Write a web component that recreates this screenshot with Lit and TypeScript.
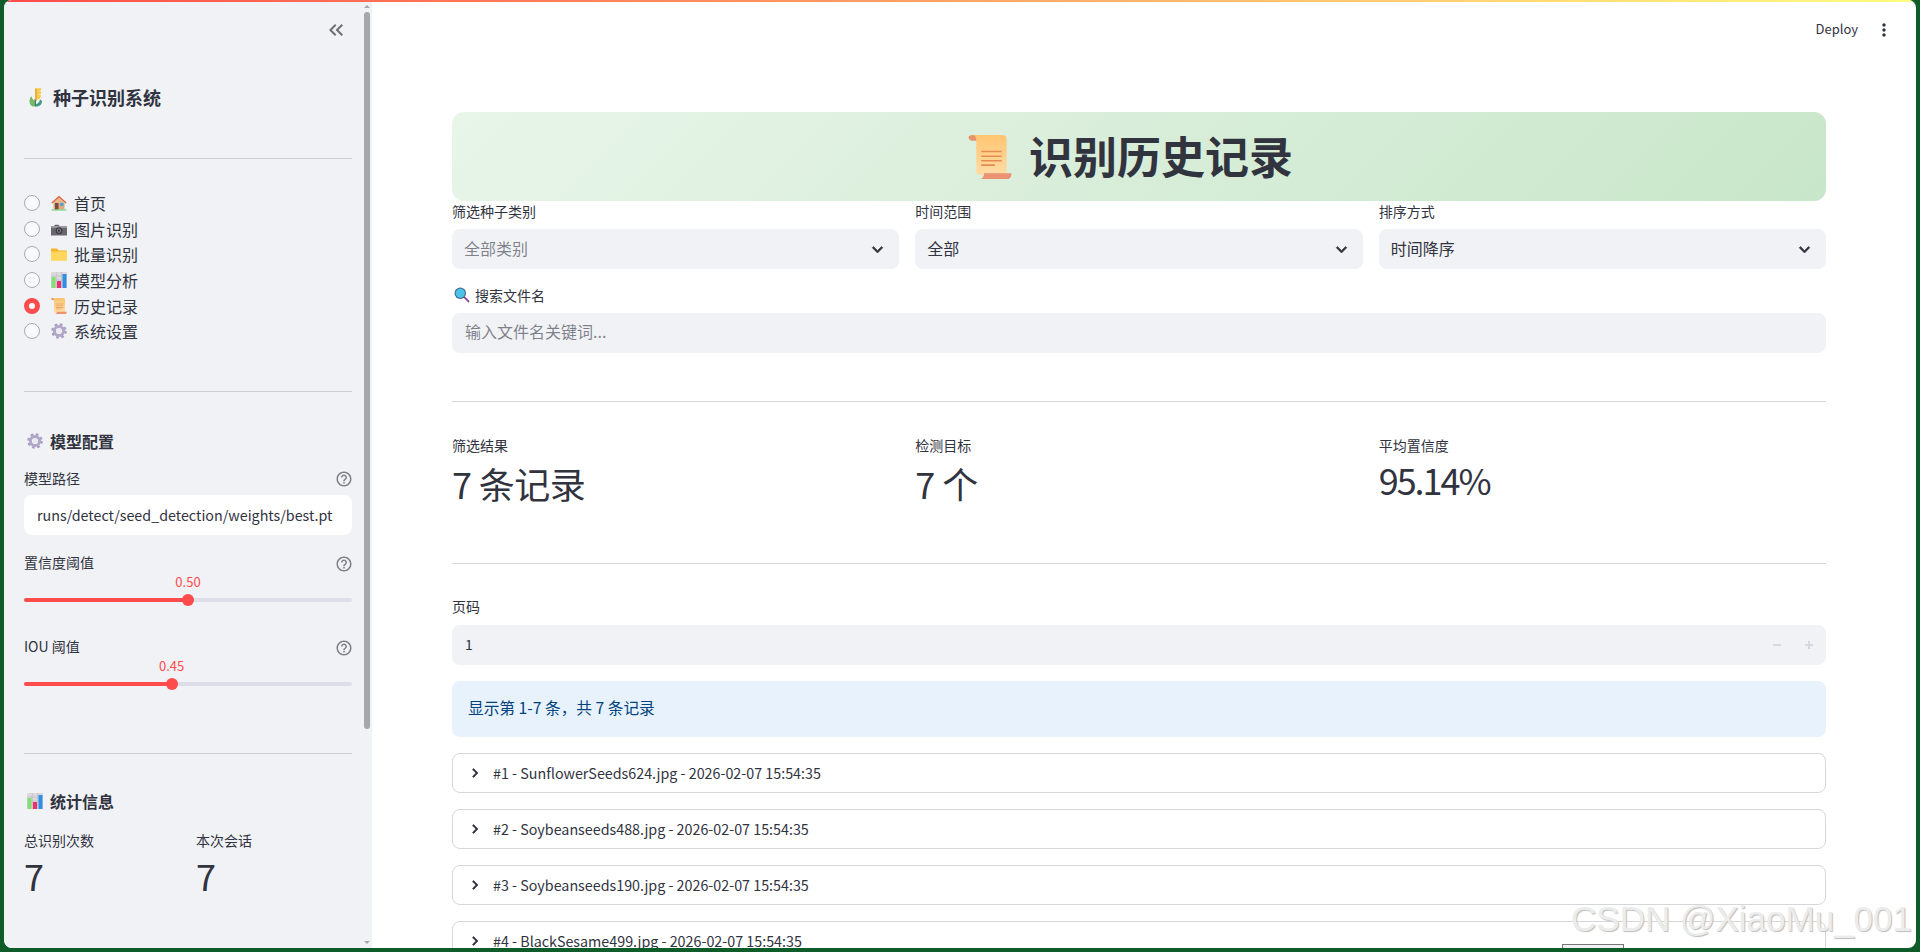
import { LitElement, html, css } from 'lit';
import { customElement } from 'lit/decorators.js';

const doubleLeft = html`<svg viewBox="0 0 24 24" width="24" height="24" fill="currentColor"><path d="M17.59 18L19 16.59 14.42 12 19 7.41 17.59 6l-6 6zM11 18l1.41-1.41L7.83 12l4.58-4.59L11 6l-6 6z"/></svg>`;
const chevronDown = html`<svg viewBox="0 0 24 24" width="21" height="21" fill="currentColor" stroke="currentColor" stroke-width="0.7"><path d="M16.59 8.59L12 13.17 7.41 8.59 6 10l6 6 6-6z"/></svg>`;
const chevronRight = html`<svg viewBox="0 0 24 24" width="18" height="18" fill="currentColor" stroke="currentColor" stroke-width="0.8"><path d="M10 6L8.59 7.41 13.17 12l-4.58 4.59L10 18l6-6z"/></svg>`;
const moreVert = html`<svg viewBox="0 0 24 24" width="20" height="20" fill="currentColor"><path d="M12 8c1.1 0 2-.9 2-2s-.9-2-2-2-2 .9-2 2 .9 2 2 2zm0 2c-1.1 0-2 .9-2 2s.9 2 2 2 2-.9 2-2-.9-2-2-2zm0 6c-1.1 0-2 .9-2 2s.9 2 2 2 2-.9 2-2-.9-2-2-2z"/></svg>`;
const help = html`<svg viewBox="0 0 24 24" width="18" height="18" fill="currentColor"><path d="M11 18h2v-2h-2v2zm1-16C6.48 2 2 6.48 2 12s4.48 10 10 10 10-4.48 10-10S17.52 2 12 2zm0 18c-4.41 0-8-3.59-8-8s3.59-8 8-8 8 3.59 8 8-3.59 8-8 8zm0-14c-2.21 0-4 1.79-4 4h2c0-1.1.9-2 2-2s2 .9 2 2c0 2-3 1.75-3 5h2c0-2.25 3-2.5 3-5 0-2.21-1.79-4-4-4z"/></svg>`;

const wheat = html`<svg viewBox="0 0 20 20" width="20" height="20">
  <path d="M9 1.500l6-.5v2.500l-3 .5 3 .4v2.600l-3 .5 3 .5c0 2.500-1.200 4-3.500 4.500L9 14z" fill="#f8cb4a"/>
  <path d="M9 1.500l2 .3v11.700l-2 .5z" fill="#eab23b"/>
  <path d="M8.500 19.500c-3.200 0-5-1.800-5-5 0-2 .6-4 1.800-5.300.7 2 1.400 3 3.200 4.500z" fill="#74bb64"/>
  <path d="M8.500 12l1.500 1v6.500H8.500z" fill="#3e7e52"/>
  <path d="M10 19.500c3.300 0 6-1.500 6-5.500l-2-1.700c-.3 2.700-1.700 4.200-4 4.900z" fill="#3d9a86"/>
</svg>`;

const house = html`<svg viewBox="0 0 16 16" width="16" height="16">
  <rect x="2.500" y="6.500" width="11" height="8" fill="#dcab7d"/>
  <path d="M8 .8L.4 7.600l1 1L8 2.800l6.600 5.800 1-1z" fill="#e2603a"/>
  <path d="M8 2.800L2.500 7.500v1h11v-1z" fill="#e8b88c"/>
  <rect x="4" y="8" width="3.500" height="6.500" fill="#7b4b3d"/>
  <rect x="9.300" y="7.800" width="3" height="3" fill="#34a3e6"/>
  <rect x="0.500" y="14.500" width="15" height="1" fill="#5fcf77"/>
</svg>`;

const camera = html`<svg viewBox="0 0 16 16" width="16" height="16">
  <path d="M0 5h3l1-1.200h3.500L8.500 5H16v9.500H0z" fill="#6a6670"/>
  <rect x="0" y="5" width="16" height="2" fill="#9a97a0"/>
  <circle cx="8" cy="9.700" r="3.400" fill="#3f3c45"/>
  <circle cx="8" cy="9.700" r="2.100" fill="#88858e"/>
  <circle cx="8" cy="9.700" r="1.100" fill="#34323a"/>
</svg>`;

const folder = html`<svg viewBox="0 0 16 16" width="16" height="16">
  <path d="M0 2.500h6l2 2h8v3H0z" fill="#f3b52f"/>
  <path d="M0 5.500h16v9.300H0z" fill="#ffd75e"/>
</svg>`;

const chart = html`<svg viewBox="0 0 16 16" width="16" height="16">
  <rect x="0" y="0" width="16" height="16" rx="1" fill="#dcd9de"/>
  <path d="M0 4h16M0 8h16M0 12h16M5.300 0v16M10.600 0v16" stroke="#b9b6bc" stroke-width=".6"/>
  <rect x="0.500" y="5" width="4" height="11" fill="#86dc77"/>
  <rect x="6" y="9" width="4" height="7" fill="#ea2f72"/>
  <rect x="11.500" y="2" width="4" height="14" fill="#2e8fe3"/>
</svg>`;

const scroll = (size: number) => html`<svg viewBox="0 0 44 45" width=${size} height=${size}>
  <defs><linearGradient id="scrollBody" x1="0" y1="0" x2="0" y2="1"><stop offset="0" stop-color="#ffc570"/><stop offset="1" stop-color="#ffdca6"/></linearGradient></defs>
  <path d="M0 3C0 1 1.500 0 4 0h6v6H5C3 6 .8 5 0 3z" fill="#e6936a"/>
  <path d="M4 0h31c2.500 0 4 1.500 4 4v37H12c-2.500 0-4-1.500-4-4V5C8 2 6.500 0 4 0z" fill="url(#scrollBody)"/>
  <path d="M13 16h21v1.600H13zM13 21h21v1.600H13zM13 25.500h21v1.600H13zM13 30h14v1.600H13z" fill="#e58c52"/>
  <path d="M16 39h28c0 3-1.500 6-4 6H11c3 0 5-2.500 5-6z" fill="#ea9272"/>
</svg>`;

const gear = html`<svg viewBox="0 0 16 16" width="16" height="16">
  <circle cx="8" cy="8" r="6.300" fill="none" stroke="#a99cc2" stroke-width="3" stroke-dasharray="2.500 2.450"/>
  <circle cx="8" cy="8" r="4.600" fill="none" stroke="#b3a7c9" stroke-width="3"/>
  <circle cx="8" cy="8" r="2.200" fill="#ece8f2"/>
</svg>`;

const lens = html`<svg viewBox="0 0 16 16" width="16" height="16">
  <path d="M9.500 10.500l1.200-1.200 4.500 4.400c.5.500.3 1-.1 1.400-.4.400-.9.400-1.300 0z" fill="#8a4a94"/>
  <circle cx="6.300" cy="6.300" r="5.700" fill="#3c5d86"/>
  <circle cx="6.300" cy="6.300" r="4.700" fill="#4cc2e4"/>
</svg>`;

const navItems = [
  { icon: house, label: '首页' },
  { icon: camera, label: '图片识别' },
  { icon: folder, label: '批量识别' },
  { icon: chart, label: '模型分析' },
  { icon: scroll(16), label: '历史记录', active: true },
  { icon: gear, label: '系统设置' },
];

const records = [
  '#1 - SunflowerSeeds624.jpg - 2026-02-07 15:54:35',
  '#2 - Soybeanseeds488.jpg - 2026-02-07 15:54:35',
  '#3 - Soybeanseeds190.jpg - 2026-02-07 15:54:35',
  '#4 - BlackSesame499.jpg - 2026-02-07 15:54:35',
];

@customElement('app-root')
export class AppRoot extends LitElement {
  static styles = css`
    :host {
      display: block;
      height: 952px;
      overflow: hidden;
      background: #0f5c2b;
      font-family: "Noto Sans CJK SC", "Noto Sans", sans-serif;
      color: #31333f;
    }
    .window {
      position: relative;
      display: flex;
      height: 948px;
      margin: 0 4px;
      border-radius: 8px;
      overflow: hidden;
      background: #fff;
    }
    .decoration {
      position: absolute;
      top: 0;
      left: 0;
      right: 0;
      height: 2px;
      z-index: 2;
      background: linear-gradient(90deg, #ff4b4b, #fffd80);
    }

    /* sidebar */
    .sidebar {
      position: relative;
      flex: none;
      box-sizing: border-box;
      width: 368px;
      padding: 0 20px;
      background: #f0f2f6;
    }
    .collapse {
      display: flex;
      justify-content: flex-end;
      align-items: center;
      height: 60px;
      padding-right: 4px;
      color: #6d6f78;
    }
    .brand {
      display: flex;
      align-items: center;
      gap: 7px;
      height: 24px;
      margin-top: 25px;
      padding-left: 2px;
      font-size: 18px;
      font-weight: 700;
      line-height: 24px;
    }
    .rule {
      height: 1px;
      background: #cdced2;
    }
    .rule.brand-rule { margin-top: 49px; }
    .rule.nav-rule { margin-top: 47px; }
    .rule.stats-rule { margin-top: 63px; }
    .nav { margin-top: 31px; }
    .nav-row {
      display: flex;
      align-items: center;
      height: 25.7px;
      font-size: 16px;
    }
    .dot {
      box-sizing: border-box;
      width: 16px;
      height: 16px;
      margin-right: 11px;
      border: 1px solid #a8a9ae;
      border-radius: 50%;
      background: #f8f9fb;
    }
    .dot.on {
      border: 5px solid #ff4b4b;
      background: #fff;
    }
    .nav-icon {
      display: flex;
      width: 16px;
      margin-right: 7px;
    }
    .section {
      display: flex;
      align-items: center;
      gap: 7px;
      height: 24px;
      padding-left: 3px;
      font-size: 16px;
      font-weight: 700;
    }
    .section.config { margin-top: 37px; }
    .section.stats { margin-top: 35px; }
    .field-label {
      display: flex;
      justify-content: space-between;
      align-items: center;
      height: 20px;
      font-size: 14px;
      line-height: 20px;
    }
    .field-label svg {
      margin: 4px -1px 0 0;
      color: #7e7f87;
    }
    .field-label.path { margin-top: 14px; }
    .field-label.path span { margin-top: 1px; }
    .field-label.conf { margin-top: 17px; }
    .field-label.iou { margin-top: 30px; }
    .path-input {
      box-sizing: border-box;
      height: 40px;
      margin-top: 8px;
      padding: 0 13px;
      border-radius: 8px;
      background: #fff;
      font-size: 14.3px;
      line-height: 40px;
      white-space: nowrap;
    }
    .slider {
      position: relative;
      height: 32px;
      margin-top: 2px;
    }
    .slider-track {
      position: absolute;
      top: 24px;
      left: 0;
      right: 0;
      height: 4px;
      border-radius: 2px;
      background: #dcdfe8;
    }
    .slider-fill {
      height: 4px;
      border-radius: 2px;
      background: #ff4b4b;
    }
    .slider-thumb {
      position: absolute;
      top: 20px;
      width: 12px;
      height: 12px;
      margin-left: -6px;
      border-radius: 50%;
      background: #ff4b4b;
    }
    .slider-value {
      position: absolute;
      top: 0;
      transform: translateX(-50%);
      font-size: 13px;
      line-height: 16px;
      color: #ff4b4b;
    }
    .side-metrics {
      display: grid;
      grid-template-columns: 172px 1fr;
      margin-top: 17px;
    }
    .side-metrics .metric-label {
      font-size: 14px;
      line-height: 20px;
    }
    .side-metrics .metric-value {
      margin-top: 3px;
      font-size: 36px;
      line-height: 44px;
    }
    .scrollbar {
      position: absolute;
      top: 0;
      bottom: 0;
      right: 2px;
      width: 6px;
    }
    .scroll-thumb {
      position: absolute;
      top: 12px;
      left: 0;
      width: 6px;
      height: 717px;
      border-radius: 3px;
      background: #a6a7ad;
    }
    .scroll-up, .scroll-down {
      position: absolute;
      left: 0;
      border-left: 3px solid transparent;
      border-right: 3px solid transparent;
    }
    .scroll-up { top: 5px; border-bottom: 3px solid #a6a7ad; }
    .scroll-down { bottom: 4px; border-top: 3px solid #a6a7ad; }

    /* main */
    .main {
      position: relative;
      flex: 1;
      min-width: 0;
      box-sizing: border-box;
      padding: 0 90px 0 80px;
      overflow: hidden;
    }
    .toolbar {
      position: absolute;
      top: 19px;
      right: 22px;
      display: flex;
      align-items: center;
      gap: 16px;
      height: 20px;
      font-size: 13px;
      line-height: 20px;
    }
    .toolbar svg { display: block; position: relative; top: 1px; }
    .banner {
      display: flex;
      justify-content: center;
      align-items: center;
      gap: 17px;
      box-sizing: border-box;
      height: 89px;
      margin-top: 112px;
      padding-right: 17px;
      border-radius: 12px;
      background: linear-gradient(135deg, #e8f5e9, #c8e6c9);
      font-size: 44px;
      font-weight: 700;
    }
    .banner span { margin-bottom: 4px; }
    .filters {
      display: grid;
      grid-template-columns: repeat(3, 1fr);
      column-gap: 16px;
    }
    .label {
      display: flex;
      align-items: center;
      gap: 5px;
      height: 20px;
      font-size: 14px;
      line-height: 20px;
    }
    .select {
      display: flex;
      justify-content: space-between;
      align-items: center;
      box-sizing: border-box;
      height: 40px;
      margin-top: 8px;
      padding: 0 11px 0 12px;
      border-radius: 8px;
      background: #f0f2f6;
    }
    .select span { margin-bottom: 2px; font-size: 16px; }
    .muted { color: rgba(49, 51, 63, 0.6); }
    .search-label { margin-top: 16px; padding-left: 2px; }
    .search {
      box-sizing: border-box;
      height: 40px;
      margin-top: 8px;
      padding: 0 13px;
      border-radius: 8px;
      background: #f0f2f6;
      font-size: 16px;
      line-height: 37px;
    }
    .main-rule {
      height: 1px;
      background: #d6d6d9;
    }
    .main-rule.first { margin-top: 48px; }
    .main-rule.second { margin-top: 45px; }
    .metrics {
      display: grid;
      grid-template-columns: repeat(3, 1fr);
      column-gap: 16px;
      height: 83px;
      margin-top: 33px;
    }
    .metric-label {
      font-size: 14px;
      line-height: 20px;
    }
    .metric-value {
      margin-top: 3px;
      font-size: 36px;
      letter-spacing: -0.6px;
      line-height: 50px;
    }
    .metric-value.latin {
      margin-top: -1px;
      letter-spacing: -2px;
    }
    .page-label { margin-top: 32px; }
    .stepper {
      display: flex;
      align-items: center;
      box-sizing: border-box;
      height: 40px;
      margin-top: 9px;
      padding: 0 13px;
      border-radius: 8px;
      background: #f0f2f6;
      font-size: 14px;
    }
    .stepper span { flex: 1; margin-bottom: 2px; }
    .stepper svg { display: block; margin-left: 24px; }
    .info {
      box-sizing: border-box;
      height: 56px;
      margin-top: 16px;
      padding: 0 16px;
      border-radius: 8px;
      background: #e8f2fc;
      color: #004280;
      font-size: 15.7px;
      line-height: 54px;
    }
    .records {
      display: flex;
      flex-direction: column;
      gap: 16px;
      margin-top: 16px;
    }
    .record {
      display: flex;
      flex: none;
      align-items: center;
      gap: 10px;
      box-sizing: border-box;
      height: 40px;
      padding-left: 12px;
      border: 1px solid #d5d6d9;
      border-radius: 8px;
      font-size: 14.3px;
      white-space: nowrap;
    }
    .record svg { flex: none; margin-left: 1px; margin-right: -1px; }
    .record span { margin-bottom: 2px; }

    /* overlays */
    .watermark {
      position: absolute;
      right: 4px;
      bottom: 9px;
      z-index: 3;
      font-family: "Liberation Sans", sans-serif;
      font-size: 35px;
      line-height: 40px;
      color: #ececec;
      text-shadow: 1px 1px 1px #bcbcbc;
      white-space: nowrap;
    }
    .tab {
      position: absolute;
      left: 1558px;
      bottom: -1px;
      z-index: 3;
      box-sizing: border-box;
      width: 62px;
      height: 5px;
      border: 1px solid #777;
      background: #f0f2f6;
    }
  `;

  private slider(pct: number, value: string) {
    return html`
      <div class="slider">
        <div class="slider-track"><div class="slider-fill" style="width:${pct}%"></div></div>
        <div class="slider-thumb" style="left:${pct}%"></div>
        <div class="slider-value" style="left:${pct}%">${value}</div>
      </div>
    `;
  }

  private renderSidebar() {
    return html`
      <aside class="sidebar">
        <div class="collapse">${doubleLeft}</div>
        <div class="brand">${wheat}<span>种子识别系统</span></div>
        <div class="rule brand-rule"></div>
        <div class="nav">
          ${navItems.map(
            (item) => html`
              <div class="nav-row">
                <div class="dot ${item.active ? 'on' : ''}"></div>
                <div class="nav-icon">${item.icon}</div>
                <span>${item.label}</span>
              </div>
            `
          )}
        </div>
        <div class="rule nav-rule"></div>
        <div class="section config">${gear}<span>模型配置</span></div>
        <div class="field-label path"><span>模型路径</span>${help}</div>
        <div class="path-input">runs/detect/seed_detection/weights/best.pt</div>
        <div class="field-label conf"><span>置信度阈值</span>${help}</div>
        ${this.slider(50, '0.50')}
        <div class="field-label iou"><span>IOU 阈值</span>${help}</div>
        ${this.slider(45, '0.45')}
        <div class="rule stats-rule"></div>
        <div class="section stats">${chart}<span>统计信息</span></div>
        <div class="side-metrics">
          <div>
            <div class="metric-label">总识别次数</div>
            <div class="metric-value">7</div>
          </div>
          <div>
            <div class="metric-label">本次会话</div>
            <div class="metric-value">7</div>
          </div>
        </div>
        <div class="scrollbar">
          <div class="scroll-up"></div>
          <div class="scroll-thumb"></div>
          <div class="scroll-down"></div>
        </div>
      </aside>
    `;
  }

  private renderMain() {
    return html`
      <main class="main">
        <div class="toolbar"><span>Deploy</span>${moreVert}</div>
        <div class="banner">${scroll(44)}<span>识别历史记录</span></div>
        <div class="filters">
          <div>
            <div class="label">筛选种子类别</div>
            <div class="select"><span class="muted">全部类别</span>${chevronDown}</div>
          </div>
          <div>
            <div class="label">时间范围</div>
            <div class="select"><span>全部</span>${chevronDown}</div>
          </div>
          <div>
            <div class="label">排序方式</div>
            <div class="select"><span>时间降序</span>${chevronDown}</div>
          </div>
        </div>
        <div class="label search-label">${lens}<span>搜索文件名</span></div>
        <div class="search muted">输入文件名关键词...</div>
        <div class="main-rule first"></div>
        <div class="metrics">
          <div>
            <div class="metric-label">筛选结果</div>
            <div class="metric-value">7 条记录</div>
          </div>
          <div>
            <div class="metric-label">检测目标</div>
            <div class="metric-value">7 个</div>
          </div>
          <div>
            <div class="metric-label">平均置信度</div>
            <div class="metric-value latin">95.14%</div>
          </div>
        </div>
        <div class="main-rule second"></div>
        <div class="label page-label">页码</div>
        <div class="stepper">
          <span>1</span>
          <svg viewBox="0 0 8 8" width="8" height="8"><path d="M0 4h8" stroke="#d5d8e1" stroke-width="2"/></svg>
          <svg viewBox="0 0 8 8" width="8" height="8"><path d="M0 4h8M4 0v8" stroke="#d5d8e1" stroke-width="2"/></svg>
        </div>
        <div class="info">显示第 1-7 条，共 7 条记录</div>
        <div class="records">
          ${records.map((text) => html`<div class="record">${chevronRight}<span>${text}</span></div>`)}
        </div>
      </main>
    `;
  }

  render() {
    return html`
      <div class="window">
        <div class="decoration"></div>
        ${this.renderSidebar()}
        ${this.renderMain()}
        <div class="tab"></div>
        <div class="watermark">CSDN @XiaoMu_001</div>
      </div>
    `;
  }
}
